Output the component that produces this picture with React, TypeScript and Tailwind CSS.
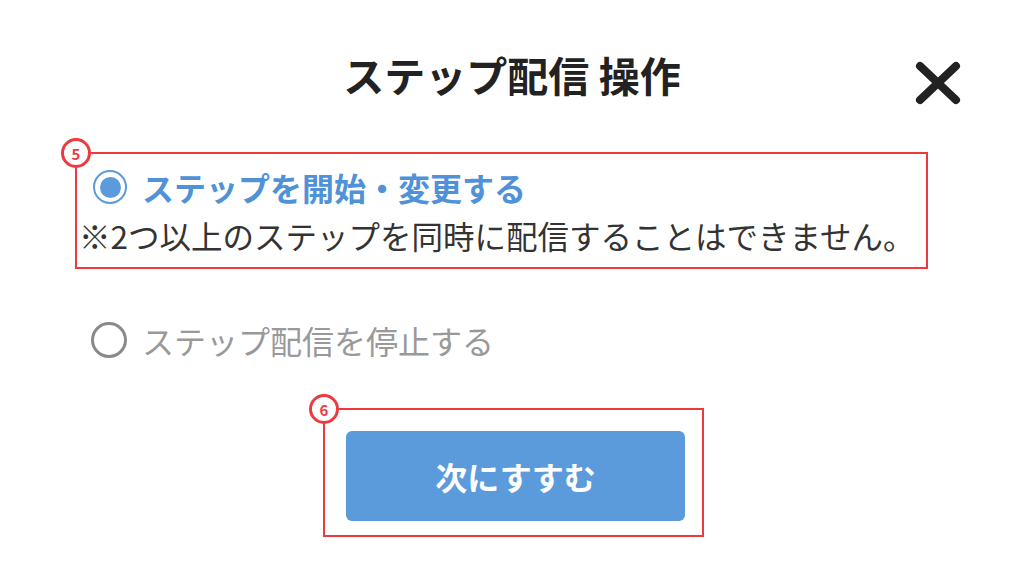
import React from 'react';

const font = { fontFamily: '"Noto Sans CJK JP", "Noto Sans", sans-serif' };

function Badge({ n }: { n: number }) {
  return (
    <span className="absolute -left-[16px] -top-[16px] flex h-[30px] w-[30px] items-center justify-center rounded-full border-[3px] border-[#ee3a3f] bg-white text-[15px] font-bold leading-none text-[#ee3a3f]">
      {n}
    </span>
  );
}

function Radio({ checked }: { checked: boolean }) {
  return checked ? (
    <span className="flex h-[34px] w-[34px] shrink-0 items-center justify-center rounded-full border-2 border-[#5b9bdc] bg-white">
      <span className="h-[21px] w-[21px] rounded-full bg-[#5b9bdc]" />
    </span>
  ) : (
    <span className="h-[36px] w-[36px] shrink-0 rounded-full border-[3px] border-[#8a8a8a] bg-white" />
  );
}

export default function App() {
  return (
    <div className="h-[576px] w-[1024px] overflow-hidden bg-white text-[#333]" style={font}>
      {/* Header */}
      <div className="relative flex h-[150px] items-start justify-center pt-[46px]">
        <h1 className="text-[41px] font-bold leading-[1.4] text-[#222]">ステップ配信 操作</h1>
        <button className="absolute right-[62px] top-[61px]">
          <svg width="48" height="44" viewBox="0 0 48 44">
            <path d="M6 5 L42 39 M42 5 L6 39" stroke="#222" strokeWidth="8" strokeLinecap="round" />
          </svg>
        </button>
      </div>

      {/* Option 1 */}
      <div className="relative ml-[75px] mt-[2px] w-[853px] border-2 border-[#ee3a3f] px-[2px] pb-[7px] pt-[10px]">
        <Badge n={5} />
        <div className="flex items-center gap-[15px] pl-[14px]">
          <Radio checked />
          <span className="text-[32px] font-bold leading-[46px] text-[#4f92d8]">ステップを開始・変更する</span>
        </div>
        <p className="whitespace-nowrap text-[31.5px] leading-[50px] text-[#333]">
          ※2つ以上のステップを同時に配信することはできません。
        </p>
      </div>

      {/* Option 2 */}
      <div className="ml-[91px] mt-[48px] flex items-center gap-[15px]">
        <Radio checked={false} />
        <span className="text-[32px] leading-[46px] text-[#999]">ステップ配信を停止する</span>
      </div>

      {/* Next button */}
      <div className="relative ml-[323px] mt-[45px] w-fit border-2 border-[#ee3a3f] pb-[14px] pl-[21px] pr-[17px] pt-[21px]">
        <Badge n={6} />
        <button className="flex h-[90px] w-[339px] items-center justify-center rounded-[6px] bg-[#5b9bdc] text-[32px] font-bold text-white">
          次にすすむ
        </button>
      </div>
    </div>
  );
}
